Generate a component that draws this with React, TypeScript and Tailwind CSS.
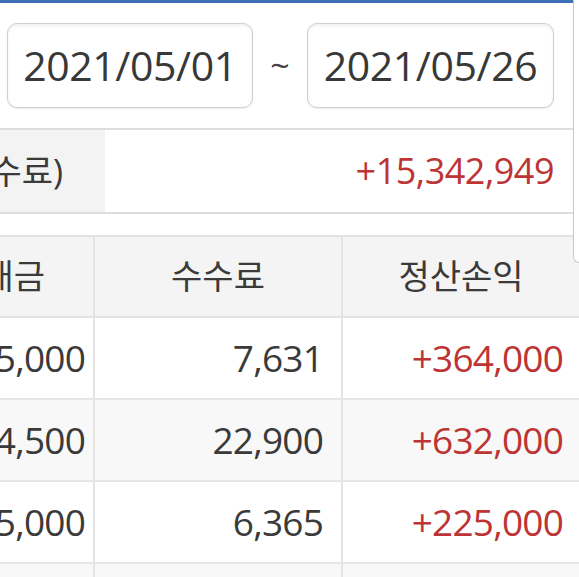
import React from 'react';

const ROWS = [
  { amount: '1,335,000', fee: '7,631', pnl: '+364,000' },
  { amount: '3,924,500', fee: '22,900', pnl: '+632,000' },
  { amount: '1,115,000', fee: '6,365', pnl: '+225,000' },
  { amount: '', fee: '', pnl: '' },
];

const DateBox: React.FC<{ value: string; width: string }> = ({ value, width }) => (
  <div
    className={`${width} h-[85px] flex items-center justify-center rounded-[10px] border border-[#cfcfcf] bg-white shadow-[inset_0_2px_3px_rgba(0,0,0,0.06),0_1px_2px_rgba(0,0,0,0.08)] text-[41px] tracking-[-0.4px] text-[#383838]`}
  >
    {value}
  </div>
);

export default function App() {
  return (
    <div
      className="relative w-[579px] h-[577px] overflow-hidden bg-white text-[#3a3a3a]"
      style={{ fontFamily: "'Open Sans', 'Noto Sans CJK KR', sans-serif" }}
    >
      {/* top accent */}
      <div className="h-[3px] bg-[#3d70b6]" />

      {/* date range */}
      <div className="h-[125px] flex items-center pl-[7px]">
        <DateBox value="2021/05/01" width="w-[246px]" />
        <div className="w-[54px] flex justify-center text-[34px] text-[#444]">~</div>
        <DateBox value="2021/05/26" width="w-[247px]" />
      </div>

      {/* summary */}
      <div className="flex h-[86px] border-y-2 border-[#dedede]">
        <div className="w-[105px] shrink-0 bg-[#f3f3f3] flex items-center justify-end pr-[42px] overflow-hidden whitespace-nowrap text-[34px] text-[#3a3a3a]">
          정산손익(수수료)
        </div>
        <div className="flex-1 flex items-center justify-end pr-[25px] text-[36px] tracking-[-0.5px] text-[#bd3434]">
          +15,342,949
        </div>
      </div>

      <div className="h-[21px]" />

      {/* table */}
      <div className="border-t-2 border-[#e2e2e2]">
        <div className="grid grid-cols-[95px_248px_1fr] h-[81px] bg-[#f4f4f4] border-b-2 border-[#e2e2e2] text-[34px] text-[#3a3a3a]">
          <div className="flex items-center justify-end pr-[48px] overflow-hidden whitespace-nowrap border-r-2 border-[#e4e4e4]">
            거래대금
          </div>
          <div className="flex items-center justify-center border-r-2 border-[#e4e4e4]">수수료</div>
          <div className="flex items-center justify-center">정산손익</div>
        </div>
        {ROWS.map((r, i) => (
          <div
            key={i}
            className={`grid grid-cols-[95px_248px_1fr] h-[82px] border-b-2 border-[#e6e6e6] text-[37px] tracking-[-0.8px] ${
              i % 2 === 1 ? 'bg-[#f8f8f8]' : 'bg-white'
            }`}
          >
            <div className="flex items-center justify-end pr-[8px] overflow-hidden whitespace-nowrap border-r-2 border-[#e4e4e4]">
              {r.amount}
            </div>
            <div className="flex items-center justify-end pr-[18px] border-r-2 border-[#e4e4e4]">{r.fee}</div>
            <div className="flex items-center justify-end pr-[16px] text-[#bd3434]">{r.pnl}</div>
          </div>
        ))}
      </div>

      {/* edge of an overlapping panel */}
      <div className="absolute top-0 right-0 w-[6px] h-[263px] bg-white border-l border-b border-[#c9c9c9] rounded-bl-[8px]" />
    </div>
  );
}
